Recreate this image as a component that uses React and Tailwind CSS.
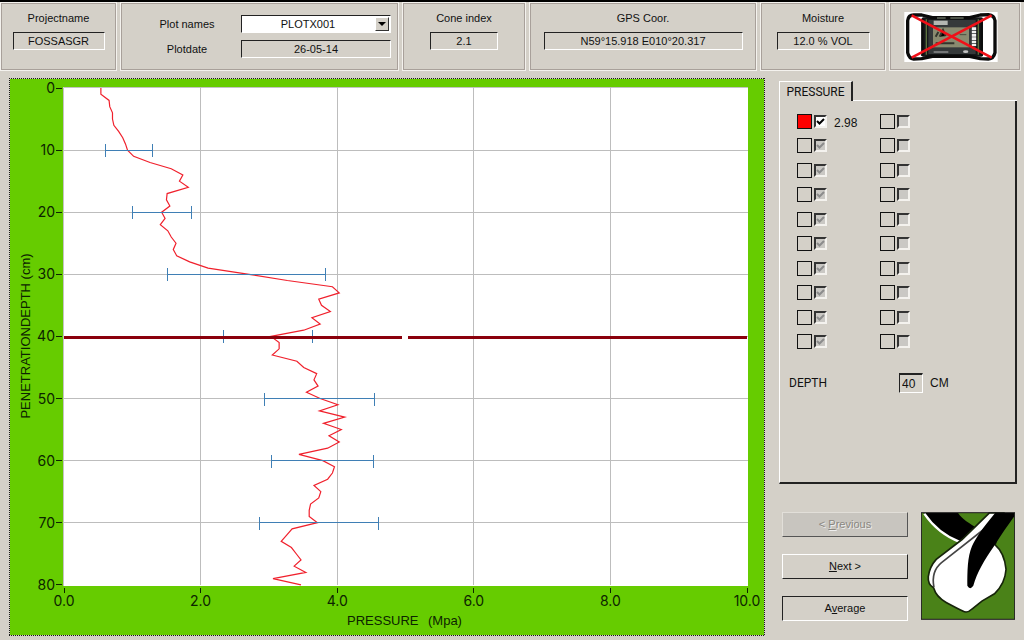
import { useState } from "react";

// mean pressure (MPa) for every cm of depth
const pressure = [
  0.54, 0.54, 0.66, 0.67, 0.71, 0.71, 0.73, 0.8, 0.86, 0.9,
  0.93, 1.02, 1.26, 1.57, 1.74, 1.69, 1.82, 1.51, 1.5, 1.55,
  1.43, 1.48, 1.41, 1.52, 1.57, 1.64, 1.6, 1.65, 1.84, 2.11,
  2.71, 3.27, 3.93, 4.03, 3.73, 3.77, 3.9, 3.63, 3.75, 3.51,
  3.03, 3.15, 3.15, 3.05, 3.41, 3.51, 3.7, 3.66, 3.72, 3.55,
  3.75, 4.01, 3.74, 4.11, 3.8, 4.06, 3.88, 4.03, 3.86, 3.44,
  3.79, 3.96, 3.93, 3.86, 3.66, 3.76, 3.73, 3.61, 3.59, 3.59,
  3.71, 3.34, 3.26, 3.18, 3.33, 3.4, 3.47, 3.37, 3.54, 3.06,
  3.47,
];

const deviations = [
  { depth: 10, from: 0.61, to: 1.29 },
  { depth: 20, from: 1.0, to: 1.87 },
  { depth: 30, from: 1.52, to: 3.83 },
  { depth: 40, from: 2.33, to: 3.64 },
  { depth: 50, from: 2.93, to: 4.55 },
  { depth: 60, from: 3.04, to: 4.53 },
  { depth: 70, from: 2.86, to: 4.61 },
];

const depthTicks = [0, 10, 20, 30, 40, 50, 60, 70, 80];
const pressureTicks = [0, 2, 4, 6, 8, 10];
const rows = [0, 1, 2, 3, 4, 5, 6, 7, 8, 9];

const px = (mpa) => 55 + mpa * 68.3;
const py = (cm) => 10 + cm * 6.21;

const sunken = "border border-t-[#222] border-l-[#222] border-r-white border-b-white";

const Panel = ({ className, children }) => (
  <div className={`border border-[#f4f2ee] shadow-[inset_0_0_0_1px_#a8a09a] ${className}`}>
    {children}
  </div>
);

const Field = ({ id, label, value, className }) => (
  <Panel className="flex flex-col items-center gap-1.5 pt-[7px]">
    <label htmlFor={id} className="leading-4">{label}</label>
    <input
      id={id}
      readOnly
      value={value}
      className={`h-[18px] text-center outline-none ${sunken} ${className}`}
    />
  </Panel>
);

const Device = () => (
  <svg viewBox="0 0 280 150" className="h-[50px] w-[94px]" aria-hidden="true">
    <rect width="280" height="150" fill="#fff" />
    <rect x="52" y="16" width="184" height="118" rx="5" fill="#16181a" />
    <path d="M66 22V128M222 22V128" stroke="#5d7340" strokeWidth="4" />
    <path
      d="M10 26Q12 9 28 9L52 9L84 17H196L228 9L252 8Q270 10 272 26V122Q268 140 252 141L228 140L196 133H84L52 140L28 141Q14 140 10 122Z"
      fill="none"
      stroke="#0b0b0b"
      strokeWidth="10"
      strokeLinejoin="round"
    />
    <path d="M54 20V132M232 20V132" stroke="#0b0b0b" strokeWidth="7" />
    <rect x="72" y="24" width="142" height="102" fill="#35393a" />
    <rect x="86" y="46" width="108" height="60" fill="#8a8b70" />
    <rect x="88" y="26" width="42" height="13" fill="#b4b7b2" />
    <path d="M94 74L102 60M106 74L116 54L124 72M94 94H150" stroke="#33352c" strokeWidth="6" />
    <path d="M166 68H186" stroke="#4a4b3f" strokeWidth="3" />
    <path d="M209 46V102" stroke="#f0f0f0" strokeWidth="13" strokeDasharray="8 2" />
    <path d="M88 120H132" stroke="#b5b5b5" strokeWidth="3" />
    <ellipse cx="184" cy="119" rx="8" ry="4" fill="#c4c4c4" />
    <path d="M98 18H124M138 18H178" stroke="#8f9a86" strokeWidth="3" />
    <path d="M22 10L262 137M262 10L22 137" stroke="#f01018" strokeWidth="8" />
  </svg>
);

const Logo = () => (
  <svg viewBox="0 0 284 324" className="h-[108px] w-[94px]" aria-hidden="true">
    <rect x="2" y="2" width="280" height="320" fill="#4a8218" />
    <path d="M8 2C36 40 76 72 120 90L174 50C146 34 124 20 112 2Z" fill="#000" />
    <path d="M10 4C36 42 76 74 118 90" fill="none" stroke="#fff" strokeWidth="7" />
    <path
      d="M206 2L124 82L46 142Q26 164 22 194Q20 218 38 228Q46 256 76 272Q106 288 126 298Q140 306 154 292L184 268L222 246Q254 216 257 172Q252 122 224 98L250 2Z"
      fill="#fff"
      stroke="#16240a"
      strokeWidth="5"
    />
    <path d="M194 48L62 152Q30 178 39 226" fill="none" stroke="#444" strokeWidth="5" />
    <path
      d="M224 2H282V12C262 40 242 68 222 100C190 146 170 180 158 222Q148 236 140 222C140 180 140 134 154 102C166 78 184 50 224 2Z"
      fill="#000"
    />
    <rect x="1" y="1" width="282" height="322" fill="none" stroke="#111" strokeWidth="3" />
  </svg>
);

const Chart = () => (
  <svg
    viewBox="0 0 756 558"
    role="img"
    aria-label="Pressure by penetration depth"
    className="block h-auto w-full bg-[#66cc00]"
  >
    <g fill="none" shapeRendering="crispEdges">
      <rect x="0.5" y="0.5" width="755" height="557" stroke="#d4d0c8" />
      <path
        d="M0 0.5H756M0 557.5H756M0.5 0V558M755.5 0V558"
        stroke="#1a1a1a"
        strokeDasharray="1 1"
      />
    </g>
    <rect x="54" y="9" width="685" height="499" fill="#fff" />
    <path d="M54.5 508V9.5H739" fill="none" stroke="#c3c3c3" />

    <g stroke="#bdbdbd" shapeRendering="crispEdges">
      {depthTicks.slice(1, -1).map((d) => (
        <line key={d} x1="55" x2="739" y1={py(d)} y2={py(d)} />
      ))}
      {pressureTicks.slice(1, -1).map((p) => (
        <line key={p} x1={px(p)} x2={px(p)} y1="9" y2="507" />
      ))}
    </g>

    <g fontFamily="Inter, 'Liberation Sans', sans-serif" fontSize="14" fill="#0c2400">
      {depthTicks.map((d) => (
        <g key={d}>
          <text x="46" y={py(d) + 5} textAnchor="end">{d}</text>
          <path d={`M47 ${py(d)}h6`} stroke="#0c2400" shapeRendering="crispEdges" />
        </g>
      ))}
      {pressureTicks.map((p) => (
        <g key={p}>
          <text x={px(p)} y="528" textAnchor="middle">{p.toFixed(1)}</text>
          <path d={`M${px(p)} 510v5`} stroke="#0c2400" shapeRendering="crispEdges" />
        </g>
      ))}
    </g>

    <polyline
      points={pressure.map((p, i) => `${px(p)},${py(i)}`).join(" ")}
      fill="none"
      stroke="#f0202c"
      strokeWidth="1.2"
    />
    <g stroke="#3f7fb5" shapeRendering="crispEdges">
      {deviations.map(({ depth, from, to }) => (
        <path
          key={depth}
          fill="none"
          d={`M${px(from)} ${py(depth) - 6}v13M${px(from)} ${py(depth)}H${px(to)}M${px(to)} ${py(depth) - 6}v13`}
        />
      ))}
    </g>
    {/* depth cursor */}
    <path d="M393 259h6" stroke="#fff" strokeWidth="3" />
    <path d="M55 259.5H393M399 259.5H738" stroke="#8a000c" strokeWidth="3" shapeRendering="crispEdges" />

    <g fontFamily="'Liberation Sans', sans-serif" fontSize="13" fill="#0c2400">
      <text x="338" y="547">PRESSURE</text>
      <text x="419" y="547">(Mpa)</text>
      <text transform="rotate(-90 21 258)" x="21" y="258" textAnchor="middle">
        PENETRATIONDEPTH (cm)
      </text>
    </g>
  </svg>
);

const Box = ({ label, checked, disabled, onChange, tick }) => (
  <span className="relative block size-[13px]">
    <input
      type="checkbox"
      aria-label={label}
      checked={checked}
      disabled={disabled}
      onChange={onChange}
      className={`block size-[13px] appearance-none border-2 border-t-[#333] border-l-[#333] border-r-[#f4f2ee] border-b-[#f4f2ee] ${disabled ? "bg-[#cac8c4]" : "bg-white"}`}
    />
    {checked && (
      <svg viewBox="0 0 13 13" className="pointer-events-none absolute inset-0">
        <path d="M3 6L5.5 8.5L10 4" fill="none" stroke={tick} strokeWidth="2" />
      </svg>
    )}
  </span>
);

const Swatch = ({ className }) => (
  <span className={`block size-[15px] border border-[#111] ${className}`} />
);

const App = () => {
  const [plot, setPlot] = useState("PLOTX001");
  const [visible, setVisible] = useState(true);

  return (
    <div className="min-h-screen bg-[#d4d0c8] font-['Liberation_Sans',sans-serif] text-[11px] text-[#111]">
      <header className="grid grid-cols-[117fr_279fr_124fr_228fr_126fr_132fr] gap-[3px] border-t-2 border-black pr-[3px]">
        <Field id="project" label="Projectname" value="FOSSASGR" className="w-[92px]" />
        <Panel className="flex h-[69px] justify-end pt-3 pr-[7px]">
          <div className="grid grid-cols-[108px_150px] content-start items-center gap-y-[7px]">
            <label htmlFor="plot" className="text-center">Plot names</label>
            <div className="relative">
              <select
                id="plot"
                value={plot}
                onChange={(e) => setPlot(e.target.value)}
                className={`block h-[18px] w-full appearance-none bg-white pr-4 text-center leading-4 [text-align-last:center] ${sunken}`}
              >
                <option>PLOTX001</option>
              </select>
              <span className="pointer-events-none absolute top-0.5 right-0.5 flex h-[14px] w-[14px] items-center justify-center border border-t-white border-l-white border-r-[#333] border-b-[#333] bg-[#d4d0c8]">
                <svg viewBox="0 0 8 4" className="h-1 w-2"><path d="M0 0h8L4 4z" /></svg>
              </span>
            </div>
            <label htmlFor="date" className="text-center">Plotdate</label>
            <input
              id="date"
              readOnly
              value="26-05-14"
              className={`h-[18px] w-full text-center outline-none ${sunken}`}
            />
          </div>
        </Panel>
        <Field id="cone" label="Cone index" value="2.1" className="w-[68px]" />
        <Field id="gps" label="GPS Coor." value="N59°15.918 E010°20.317" className="w-[199px]" />
        <Field id="moisture" label="Moisture" value="12.0 % VOL" className="w-[93px]" />
        <Panel className="flex items-center pl-[14px]">
          <Device />
        </Panel>
      </header>

      <main className="flex gap-[14px] pt-[7px] pr-[7px] pl-[9px]">
        <div className="min-w-0 flex-1">
          <Chart />
        </div>

        <aside className="flex w-[238px] shrink-0 flex-col pt-[3px] pb-[15px]">
          <div className="flex h-5">
            <button
              type="button"
              className="w-[74px] border-t border-r-2 border-l border-t-white border-r-[#222] border-l-white font-[Roboto,sans-serif] text-xs"
            >
              PRESSURE
            </button>
            <div className="flex-1 border-b border-white" />
          </div>
          <section className="flex-1 border-r-2 border-b-2 border-l border-r-[#222] border-b-[#222] border-l-white pt-3 text-xs">
            <div className="flex h-[237px] flex-col justify-between pl-[17px]">
              {rows.map((i) => (
                <div key={i} className="grid h-4 grid-cols-[83px_1fr] grid-rows-[16px] items-center">
                  <div className="flex items-center gap-0.5">
                    <Swatch className={i === 0 ? "bg-[#ff0000]" : ""} />
                    {i === 0 ? (
                      <Box
                        label="Show series 1"
                        checked={visible}
                        onChange={() => setVisible(!visible)}
                        tick="#000"
                      />
                    ) : (
                      <Box label={`Show series ${i + 1}`} checked disabled tick="#8c8c8c" />
                    )}
                    {i === 0 && <span className="pt-1 pl-[5px] leading-3">2.98</span>}
                  </div>
                  <div className="flex items-center gap-0.5">
                    <Swatch />
                    <Box label={`Show series ${i + 11}`} checked={false} disabled />
                  </div>
                </div>
              ))}
            </div>
            <div className="flex items-center pt-[23px] pl-[9px]">
              <label htmlFor="depth" className="w-[110px] font-[Roboto,sans-serif]">DEPTH</label>
              <input
                id="depth"
                defaultValue="40"
                className="h-5 w-6 border border-t-2 border-t-[#222] border-l-[#222] border-r-white border-b-white pl-0.5 outline-none"
              />
              <span className="pl-[7px]">CM</span>
            </div>
          </section>

          <div className="flex justify-between pt-7 pr-0.5 pl-[3px]">
            <div className="flex w-[126px] flex-col gap-[17px]">
              <button
                type="button"
                disabled
                className="h-[25px] border border-t-[#e2dfd9] border-l-[#e2dfd9] border-r-[#555] border-b-[#555] bg-[#c8c5bf] text-[#8a8781] [text-shadow:1px_1px_0_#eee]"
              >
                &lt; <u>P</u>revious
              </button>
              <button
                type="button"
                className="h-[25px] border border-t-white border-l-white border-r-[#222] border-b-[#222]"
              >
                <u>N</u>ext &gt;
              </button>
              <button type="button" className={`h-[25px] ${sunken}`}>
                A<u>v</u>erage
              </button>
            </div>
            <Logo />
          </div>
        </aside>
      </main>
    </div>
  );
};

export default App;
